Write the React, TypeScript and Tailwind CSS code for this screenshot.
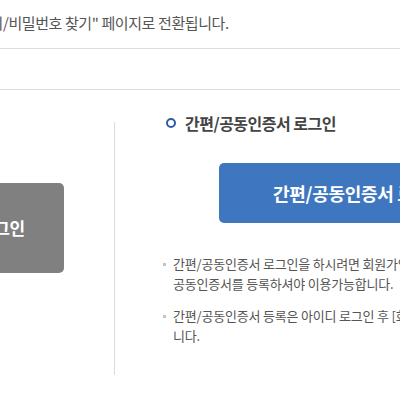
export default function App() {
  return (
    <div className="w-[400px] h-[400px] overflow-hidden bg-white text-[#555] font-['Noto_Sans_CJK_KR',sans-serif]">
      {/* notice */}
      <div className="h-[49px] flex items-center border-b border-[#dedede]">
        <p className="-ml-[44px] whitespace-nowrap text-[15px] tracking-[-0.4px] leading-[20px] -mt-[2px]">
          "아이디/비밀번호 찾기" 페이지로 전환됩니다.
        </p>
      </div>
      <div className="h-[41px] border-b border-[#dedede]" />

      <div className="flex pt-[32px]">
        {/* id login */}
        <div className="w-[114px] shrink-0 flex justify-end pr-[50px] pt-[61px]">
          <button className="w-[173px] h-[90px] shrink-0 rounded-[5px] bg-[#808080] text-white text-[17px] font-bold tracking-[-0.5px]">
            아이디 로그인
          </button>
        </div>

        <div className="w-px h-[253px] bg-[#dcdcdc] shrink-0" />

        {/* cert login */}
        <div className="pl-[51px] shrink-0 w-[600px]">
          <h3 className="flex items-center gap-[9px] text-[16px] font-bold text-[#444] leading-[20px] -mt-[9px] tracking-[-0.5px]">
            <span className="w-[10px] h-[10px] rounded-full border-2 border-[#2f5aa5]" />
            간편/공동인증서 로그인
          </h3>
          <button className="mt-[30px] ml-[53px] w-[281px] h-[60px] rounded-[5px] bg-[#3e77c0] text-white text-[18px] font-bold tracking-[-0.3px]">
            간편/공동인증서 로그인
          </button>
          <ul className="mt-[31px] text-[13px] leading-[20px] tracking-[-0.2px] flex flex-col gap-[12px]">
            <li className="relative pl-[7px] whitespace-nowrap">
              <span className="absolute left-[-3px] top-[9px] w-[3px] h-[3px] bg-[#c4c4c4]" />
              간편/공동인증서 로그인을 하시려면 회원가입 후 간편/
              <br />
              공동인증서를 등록하셔야 이용가능합니다.
            </li>
            <li className="relative pl-[7px] whitespace-nowrap">
              <span className="absolute left-[-3px] top-[9px] w-[3px] h-[3px] bg-[#c4c4c4]" />
              간편/공동인증서 등록은 아이디 로그인 후 [회원정보수정]에서 가능합
              <br />
              니다.
            </li>
          </ul>
        </div>
      </div>
    </div>
  )
}
